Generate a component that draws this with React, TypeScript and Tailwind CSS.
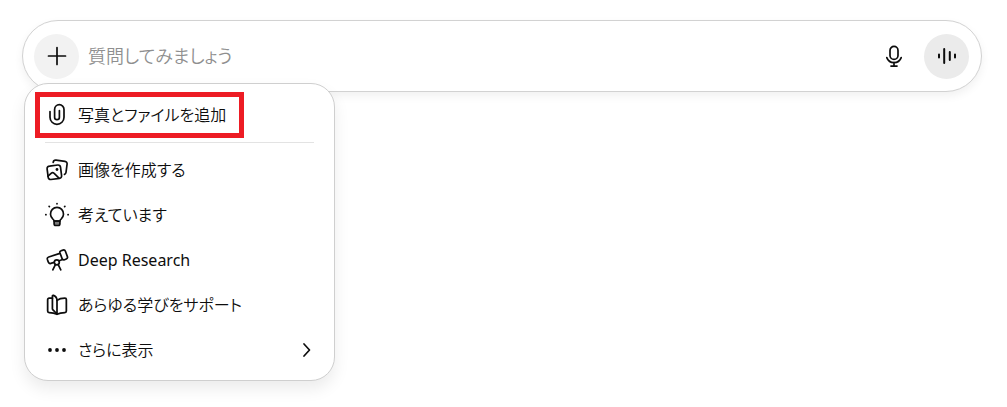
import type { ReactNode } from 'react';
import clsx from 'clsx';

interface MenuItemProps {
  icon: ReactNode;
  label: string;
  lang?: 'ja' | 'en';
  highlighted?: boolean;
  hasSubmenu?: boolean;
}

const strokeProps = {
  fill: 'none',
  stroke: 'currentColor',
  strokeWidth: 1.7,
  strokeLinecap: 'round',
  strokeLinejoin: 'round',
} as const;

function PaperclipIcon() {
  return (
    <svg className="w-[22px] h-[22px] overflow-visible" viewBox="1 1 22 22" {...strokeProps}>
      <path d="M5 8.6v5.7a7 7 0 0 0 14 0V6.4a4.7 4.7 0 0 0-9.4 0v7.9a2.4 2.4 0 0 0 4.8 0V7.5" />
    </svg>
  );
}

function ImagesIcon() {
  return (
    <svg className="w-[22px] h-[22px] overflow-visible" viewBox="1 1 22 22" {...strokeProps}>
      <path d="M4.5 8.1 12.8 7a2.4 2.4 0 0 1 2.7 2.1l1.1 8.6a2.4 2.4 0 0 1-2.1 2.7l-8.6 1.1a2.4 2.4 0 0 1-2.7-2.1L2.1 10.8a2.4 2.4 0 0 1 2.4-2.7Z" />
      <path d="M8.2 4.3a2.6 2.6 0 0 1 2.9-2.1l8.9 1.1a2.4 2.4 0 0 1 2.1 2.7L21 14.5a2.4 2.4 0 0 1-1.5 1.9" />
      <path d="M3 18.2l3.4-3.1a1.8 1.8 0 0 1 2.5.1l5.1 4.9" />
      <circle cx="12" cy="11.5" r="1.4" fill="currentColor" stroke="none" />
    </svg>
  );
}

function BulbIcon() {
  return (
    <svg className="w-[22px] h-[22px] overflow-visible" viewBox="1 1 22 22" {...strokeProps}>
      <path d="M9.1 18c0-1-.5-1.5-1.4-2.2a6.5 6.5 0 1 1 8.6 0c-.9.7-1.4 1.2-1.4 2.2Z" />
      <path d="M9.1 18v2.8a1.7 1.7 0 0 0 1.7 1.7h2.4a1.7 1.7 0 0 0 1.7-1.7V18Z" fill="currentColor" fillOpacity="0.55" />
      <path d="M12 .6v.2M4.1 3.4l.3.3M19.9 3.4l-.3.3M.8 11.7H1M23 11.7h.2" />
    </svg>
  );
}

function TelescopeIcon() {
  return (
    <svg className="w-[22px] h-[22px] overflow-visible" viewBox="1 1 22 22" {...strokeProps}>
      <path d="m16 2.8 2-.7a1.9 1.9 0 0 1 2.4 1.1l2 5.4a1.9 1.9 0 0 1-1.1 2.4l-1.8.7a1.9 1.9 0 0 1-2.4-1.1l-2.2-5.9A1.5 1.5 0 0 1 16 2.8Z" />
      <path d="M14.9 5.4 3.7 9a2 2 0 0 0-1.3 2.5l.9 2.6a2 2 0 0 0 2.5 1.3l3.3-1M14.3 12.7l2.6-.9" />
      <circle cx="11.8" cy="14.3" r="2.5" />
      <path d="m10.4 16.6-2.6 5.2M13.2 16.6l2.6 5.2" />
    </svg>
  );
}

function BookIcon() {
  return (
    <svg className="w-[22px] h-[22px]" viewBox="0 0 24 24" {...strokeProps} strokeWidth={1.9}>
      <path d="M7 4.6H3.4a1.6 1.6 0 0 0-1.6 1.6v12.4c0 .9.7 1.6 1.6 1.6 3.6 0 6.1.5 8.6 2 2.5-1.5 5-2 8.6-2 .9 0 1.6-.7 1.6-1.6V5.9c0-.9-.7-1.5-1.6-1.5-3.6 0-6.4.8-8.6 2.5" />
      <path d="M7 2.5v13.7c0 .7.3 1.1.9 1.4l4.1 4.2V7c0-2.4-1.5-4.6-3.7-5.5A.9.9 0 0 0 7 2.5Z" />
    </svg>
  );
}

function DotsIcon() {
  return (
    <svg className="w-[22px] h-[22px]" viewBox="1 1 22 22" fill="currentColor">
      <circle cx="5" cy="12" r="1.9" />
      <circle cx="12" cy="12" r="1.9" />
      <circle cx="19" cy="12" r="1.9" />
    </svg>
  );
}

function MenuItem({ icon, label, lang = 'ja', highlighted, hasSubmenu }: MenuItemProps) {
  return (
    <button
      type="button"
      role="menuitem"
      className="relative flex w-full h-[45px] items-center gap-2.5 px-[11px] text-left text-[16px] leading-6"
    >
      {icon}
      <span lang={lang} className={clsx('flex-1 whitespace-nowrap', lang === 'en' && 'font-normal')}>
        {label}
      </span>
      {hasSubmenu && (
        <svg className="w-4 h-4" viewBox="0 0 16 16" {...strokeProps}>
          <path d="m7 2 5.5 6L7 14" />
        </svg>
      )}
      {highlighted && (
        <span className="absolute inset-x-0 top-0 h-[46px] w-[209px] border-[5px] border-[#ed1c24]" />
      )}
    </button>
  );
}

export default function App() {
  return (
    <div className="min-h-screen bg-white pl-[22px] pr-[25px] pt-5 pb-7 text-[#0d0d0d] font-['Noto_Sans','Noto_Sans_CJK_JP',sans-serif] font-[350] [font-feature-settings:'palt']">
      <div className="relative">
        <form className="flex h-[72px] items-center rounded-full border border-[#d2d2d2] bg-white pl-[11px] pr-3 shadow-[0_4px_10px_rgba(0,0,0,0.06)]">
          <button
            type="button"
            aria-label="追加"
            className="flex h-[45px] w-[45px] shrink-0 items-center justify-center rounded-full bg-[#f2f2f2]"
          >
            <svg className="w-6 h-6" viewBox="0 0 24 24" {...strokeProps}>
              <path d="M12 3.5v17M3.5 12h17" />
            </svg>
          </button>
          <input
            type="text"
            aria-label="質問してみましょう"
            placeholder="質問してみましょう"
            className="ml-[9px] h-8 min-w-0 flex-1 bg-transparent text-[18px] leading-8 outline-none placeholder:text-[#8f8f8f]"
          />
          <button type="button" aria-label="音声入力" className="flex h-[45px] w-[45px] shrink-0 items-center justify-center">
            <svg className="w-6 h-6" viewBox="0 0 24 24" {...strokeProps}>
              <rect x="8" y="2.4" width="8" height="13" rx="4" />
              <path d="M4.8 13.6a7.7 7.7 0 0 0 14.4 0M12 18.4v3.7M9 22.1h6" />
            </svg>
          </button>
          <button
            type="button"
            aria-label="音声モード"
            className="ml-2 flex h-[45px] w-[45px] shrink-0 items-center justify-center rounded-full bg-[#ebebeb]"
          >
            <svg className="w-6 h-6" viewBox="0 0 24 24" {...strokeProps} strokeWidth={2}>
              <path d="M4 10.5v3M9.2 5v14M14.8 8v8M20 10.5v3" />
            </svg>
          </button>
        </form>

        <div
          role="menu"
          className="absolute left-[2px] top-[63px] w-[311px] rounded-3xl border border-[#cfcfcf] bg-white px-[10px] py-2 shadow-[0_8px_16px_rgba(0,0,0,0.08)]"
        >
          <MenuItem icon={<PaperclipIcon />} label="写真とファイルを追加" highlighted />
          <hr className="mx-[10px] mt-[5px] mb-1 border-[#e3e3e3]" />
          <MenuItem icon={<ImagesIcon />} label="画像を作成する" />
          <MenuItem icon={<BulbIcon />} label="考えています" />
          <MenuItem icon={<TelescopeIcon />} label="Deep Research" lang="en" />
          <MenuItem icon={<BookIcon />} label="あらゆる学びをサポート" />
          <MenuItem icon={<DotsIcon />} label="さらに表示" hasSubmenu />
        </div>
      </div>
    </div>
  );
}
